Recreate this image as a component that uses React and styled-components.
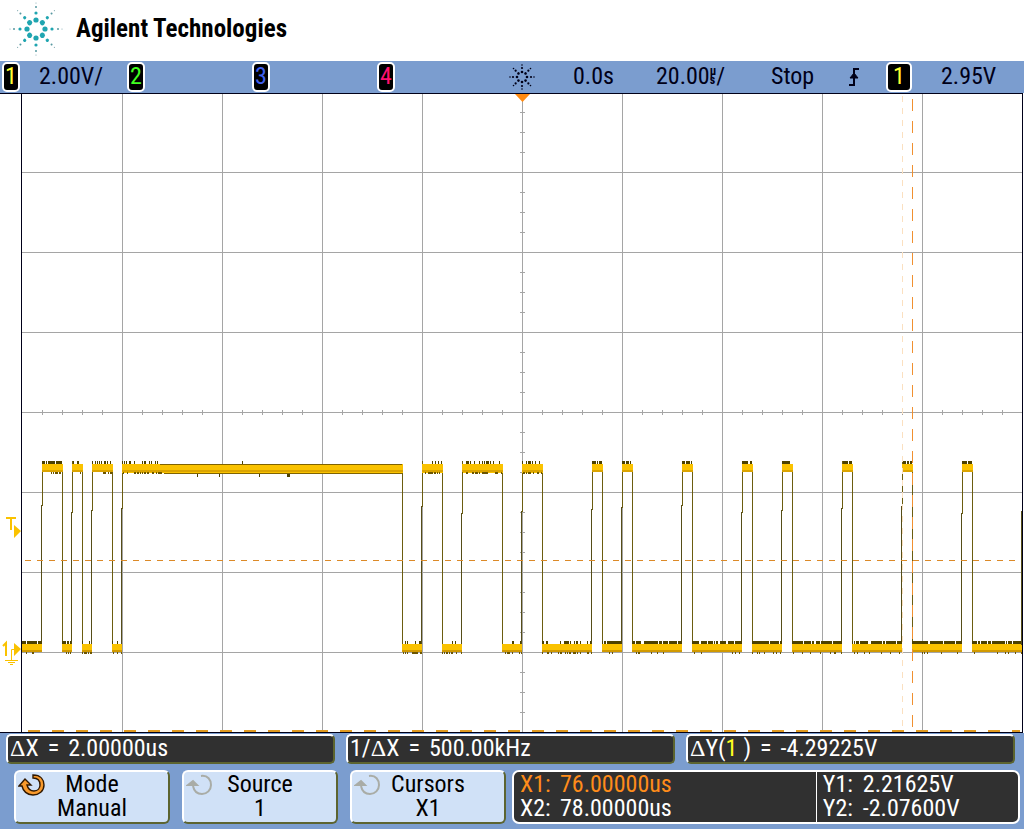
import React from "react";
import styled, { createGlobalStyle } from "styled-components";

const blue = "#7b9dcf";
const ink = "#000018";
const gold = "#fac200";
const orange = "#ff8c1a";

const GlobalStyle = createGlobalStyle`
  * { box-sizing: border-box; }
  body { margin: 0; background: ${blue}; }
  body, button { font-family: "Roboto Condensed", "Liberation Sans Narrow", Roboto, sans-serif; font-size: 24px; line-height: 24px; }
`;

const Screen = styled.main`
  display: flex;
  flex-direction: column;
`;

const Brand = styled.header`
  display: flex;
  align-items: center;
  gap: 12px;
  height: 61px;
  padding: 0 8px 4px;
  background: #fff;
`;

const BrandName = styled.h1`
  margin: 0;
  font-size: 25px;
  font-weight: 700;
  color: #000;
`;

const StatusBar = styled.section`
  display: grid;
  grid-template-columns: 125fr 125fr 125fr 131fr 65fr 83fr 115fr 76fr 39fr 55fr 83fr;
  align-items: center;
  height: 32px;
  padding-left: 2px;
  background: ${blue};
  color: ${ink};
  white-space: nowrap;
`;

const Channel = styled.div`
  display: flex;
  align-items: center;
  gap: 19px;
`;

const Badge = styled.span`
  width: ${(p) => (p.$wide ? 26 : 18)}px;
  height: 30px;
  border: 2px solid #fff;
  border-radius: 5px;
  background: #000;
  color: ${(p) => p.$color};
  line-height: 25px;
  text-align: center;
`;

const Reading = styled.span`
  display: flex;
  align-items: center;
  height: 32px;
  padding-bottom: 2px;
`;

const TimeUnit = styled.span`
  display: flex;
  flex-direction: column;
  font-size: 12px;
  font-weight: 700;
  line-height: 9px;
`;

const Chart = styled.svg`
  display: block;
  width: 100%;
  height: auto;
  background: #fff;
`;

const Panel = styled.section`
  display: flex;
  flex-direction: column;
  gap: 6px;
  padding: 1px 0 5px;
  background: ${blue};
`;

const Measurements = styled.div`
  display: grid;
  grid-template-columns: repeat(3, 1fr);
  gap: 11px;
  padding: 0 9px 0 6px;
`;

const Measurement = styled.output`
  display: flex;
  gap: 9px;
  height: 30px;
  padding: 0 2px;
  border: 2px solid;
  border-color: #fff #5c6430 #5c6430 #fff;
  border-radius: 5px;
  background: #303030;
  color: #fff;
  white-space: nowrap;
`;

const Delta = styled.span`
  font-family: "Liberation Serif", serif;
`;

const Source = styled.span`
  padding-right: 6px;
  color: #ffff20;
`;

const Controls = styled.div`
  display: grid;
  grid-template-columns: 492fr 508fr;
  gap: 6px;
  padding: 0 4px 0 14px;
`;

const Softkeys = styled.nav`
  display: grid;
  grid-template-columns: repeat(3, 1fr);
  gap: 12px;
`;

const Softkey = styled.button`
  display: grid;
  grid-template-columns: 28px 1fr 28px;
  align-items: start;
  height: 54px;
  padding: 0 2px;
  border: 2px solid;
  border-color: #fff #5c6430 #5c6430 #fff;
  border-radius: 6px;
  background: #d0e1f7;
  color: #000;
  text-align: center;
`;

const KeyText = styled.span`
  display: flex;
  flex-direction: column;
  align-items: center;
`;

const CursorPanel = styled.div`
  display: grid;
  grid-template-columns: 303fr 203fr;
  height: 54px;
  border: 2px solid #fff;
  border-radius: 7px;
  background: #303030;
  color: #fff;
`;

const CursorPair = styled.dl`
  margin: 0;
  padding: 0 6px;
  & + & { border-left: 1px solid #fff; }
`;

const CursorRow = styled.div`
  display: flex;
  color: ${(p) => (p.$active ? orange : "#fff")};
`;

const CursorName = styled.dt`
  width: 40px;
`;

const CursorValue = styled.dd`
  margin: 0;
`;

const directions = [0, 45, 90, 135, 180, 225, 270, 315];

function Spark({ size, dots, color }) {
  return (
    <svg width={size} height={size} viewBox={`${-size / 2} ${-size / 2} ${size} ${size}`} aria-hidden="true">
      {directions.map((a) => (
        <g key={a} transform={`rotate(${a})`}>
          {dots.map(([d, r, c]) => (
            <circle key={d} cx={d} cy="0" r={r} fill={c || color} />
          ))}
        </g>
      ))}
    </svg>
  );
}

function EdgeIcon() {
  return (
    <svg width="14" height="20" viewBox="0 0 14 20" fill="none" stroke={ink} strokeWidth="2" aria-label="Rising edge">
      <path d="M2 18H7V2H12" />
      <path d="M3 11L7 6L11 11Z" fill={ink} strokeWidth="1" />
    </svg>
  );
}

function KnobIcon({ active }) {
  const path = "M15 3C23 3 26 8 26 13C26 19 21 23 15 23C9 23 5 19 4 14H1L7 7L13 13H9C10 17 12 19 16 19C20 19 22 16 22 13C22 9 20 6 15 6Z";
  return (
    <svg width="28" height="26" viewBox="0 0 28 26" aria-hidden="true">
      {active ? (
        <path d={path} fill="#f99a2c" stroke="#301800" strokeWidth="1.4" />
      ) : (
        <g fill="none" stroke="#a9aca6" strokeWidth="2">
          <path d="M15 4C22 3 25 8 25 13C25 18 21 22 16 22C11 22 8 19 7 14" />
          <path d="M2 13L7 9L11 13Z" fill="#a9aca6" />
        </g>
      )}
    </svg>
  );
}

const pulses = [
  [42, 62], [72, 82], [92, 112], [122, 402], [422, 442], [462, 502], [522, 542], [592, 602],
  [622, 632], [682, 692], [742, 752], [782, 792], [842, 852], [902, 912], [962, 972],
];
const lows = pulses.map(([start], i) => [i ? pulses[i - 1][1] : 22, start]).concat([[972, 1022]]);

function noise(from, to, y, density, seed, height = 3) {
  let d = "";
  for (let x = from; x < to; x += 1) {
    const v = Math.abs(Math.sin(x * 12.9898 + seed * 78.233) * 43758.5453) % 1;
    if (v < density) d += `M${x} ${y}h1v${height}h-1z`;
  }
  return d;
}

function Trace() {
  const busy = (x) => (x > 590 || x === 42 ? 0.8 : 0.3);
  return (
    <g shapeRendering="crispEdges">
      {pulses.map(([a, b], i) => {
        const split = 505 + ((i * 7) % 9);
        const long = b - a > 100;
        const thick = a > 110 && a < 560;
        return (
          <g key={a}>
            <path d={`M${a - 0.5} 645V${split}`} stroke="#554d18" />
            <path d={`M${a + 0.5} ${split + 1}V461M${b + 0.5} 464V645`} stroke="#6c5d10" />
            <rect x={a} y="464" width={b - a + 1} height={thick ? 9 : 8} fill={gold} />
            <path d={`M${a} 471H${b + 1}`} stroke="#dba400" strokeWidth="2" />
            {long && <path d={`M${a + 38} 464.5H${b}M${a + 42} 473.5H${b}`} stroke="#806300" />}
            <path d={noise(a, long ? 158 : b, 461, busy(a), 1)} fill="#4d4200" />
            {thick ? (
              <path d={noise(a, long ? 165 : b, 472, 0.5, 2, 2)} fill="#6b5500" />
            ) : (
              a < 110 && <path d={noise(a + 8, b, 472, 0.4, 2, 2)} fill="#6b5500" />
            )}
          </g>
        );
      })}
      {lows.map(([a, b]) => (
        <g key={a}>
          <rect x={a} y="644" width={b - a} height="8" fill={gold} />
          <path d={`M${a} 651H${b}`} stroke="#d29a00" strokeWidth="2" />
          <path d={noise(a, b, 641, a < 40 || a > 600 ? 0.85 : 0.3, 3)} fill="#4d4200" />
          <path d={noise(a, b, 652, a > 60 && a < 560 ? 0.5 : 0.15, 4, 2)} fill="#6b5500" />
        </g>
      ))}
      <path d="M242 461h1v3h-1zM197 474h1v3h-1zM219 474h1v3h-1zM259 474h1v3h-1zM287 474h3v3h-3z" fill="#4d4200" />
      <path d="M1021.5 645V511" stroke="#554d18" />
    </g>
  );
}

function Grid() {
  const columns = [122, 222, 322, 422, 522, 622, 722, 822, 922];
  const rows = [172, 252, 332, 412, 492, 572, 652];
  let ticks = "";
  for (let y = 112; y < 732; y += 20) ticks += `M520 ${y + 0.5}h5`;
  for (let x = 42; x < 1022; x += 20) ticks += `M${x + 0.5} 410v5`;
  return (
    <g stroke="#a5a5a5" shapeRendering="crispEdges">
      <path d={columns.map((x) => `M${x + 0.5} 94V732`).join("")} />
      <path d={rows.map((y) => `M22 ${y + 0.5}H1022`).join("")} />
      <path d={ticks} />
    </g>
  );
}

function Waveform() {
  return (
    <Chart viewBox="0 93 1024 640" role="img" aria-label="Channel 1 waveform">
      <Grid />
      <Trace />
      <g fill="none" shapeRendering="crispEdges">
        <path d="M25 560.5H1020" stroke="#dc8a28" strokeDasharray="6 6" />
        <path d="M902.5 96V728" stroke="#fbe0c0" strokeDasharray="6 6" />
        <path d="M912.5 99V728" stroke="#f09030" strokeDasharray="12 10" />
        <path d="M0 93.5H1023M0 732.5H1023M21.5 93V733M1022.5 93V733" stroke="#000018" />
        <path d="M28 731H1020" stroke="#e09a20" strokeWidth="2" strokeDasharray="12 12" />
      </g>
      <path d="M515 94H530L522.5 102Z" fill="#ff8a10" />
      <path d="M14 525L21 531L14 538ZM14 643L21 649L14 656Z" fill={gold} />
      <path d="M6 518H16M11 518V530M3 646L6 643V656" fill="none" stroke={gold} strokeWidth="2" />
      <path d="M11.5 660V649.5H14M5 660.5H18M8 662.5H15M10 664.5H13" fill="none" stroke={gold} />
    </Chart>
  );
}

const channels = [
  { id: 1, color: "#ffff30", scale: "2.00V/" },
  { id: 2, color: "#40ff20" },
  { id: 3, color: "#4060f0" },
  { id: 4, color: "#ff1070" },
];

const softkeys = [
  { name: "Mode", value: "Manual", active: true },
  { name: "Source", value: "1" },
  { name: "Cursors", value: "X1" },
];

const cursors = [
  [["X1:", "76.00000us", true], ["X2:", "78.00000us"]],
  [["Y1:", "2.21625V"], ["Y2:", "-2.07600V"]],
];

export default function App() {
  return (
    <Screen>
      <GlobalStyle />
      <Brand>
        <Spark size={56} color="#1fa5b0" dots={[[9, 2.6], [16, 1.6], [22, 1, "#5798a0"], [26, 0.6, "#80a8b0"]]} />
        <BrandName>Agilent Technologies</BrandName>
      </Brand>
      <StatusBar>
        {channels.map((c) => (
          <Channel key={c.id}>
            <Badge $color={c.color}>{c.id}</Badge>
            {c.scale && <Reading>{c.scale}</Reading>}
          </Channel>
        ))}
        <Spark size={28} color={ink} dots={[[5, 1.3], [9, 1.1], [12, 0.8]]} />
        <Reading>0.0s</Reading>
        <Reading>20.00<TimeUnit><span>µ</span><span>s</span></TimeUnit>/</Reading>
        <Reading>Stop</Reading>
        <EdgeIcon />
        <Badge $wide $color="#ffff30">1</Badge>
        <Reading>2.95V</Reading>
      </StatusBar>
      <Waveform />
      <Panel>
        <Measurements>
          <Measurement><span><Delta>Δ</Delta>X</span><span>=</span><span>2.00000us</span></Measurement>
          <Measurement><span>1/<Delta>Δ</Delta>X</span><span>=</span><span>500.00kHz</span></Measurement>
          <Measurement><span><Delta>Δ</Delta>Y(<Source>1</Source>)</span><span>=</span><span>-4.29225V</span></Measurement>
        </Measurements>
        <Controls>
          <Softkeys>
            {softkeys.map((k) => (
              <Softkey key={k.name} type="button">
                <KnobIcon active={k.active} />
                <KeyText><span>{k.name}</span><span>{k.value}</span></KeyText>
              </Softkey>
            ))}
          </Softkeys>
          <CursorPanel>
            {cursors.map((pair) => (
              <CursorPair key={pair[0][0]}>
                {pair.map(([name, value, active]) => (
                  <CursorRow key={name} $active={active}>
                    <CursorName>{name}</CursorName>
                    <CursorValue>{value}</CursorValue>
                  </CursorRow>
                ))}
              </CursorPair>
            ))}
          </CursorPanel>
        </Controls>
      </Panel>
    </Screen>
  );
}
